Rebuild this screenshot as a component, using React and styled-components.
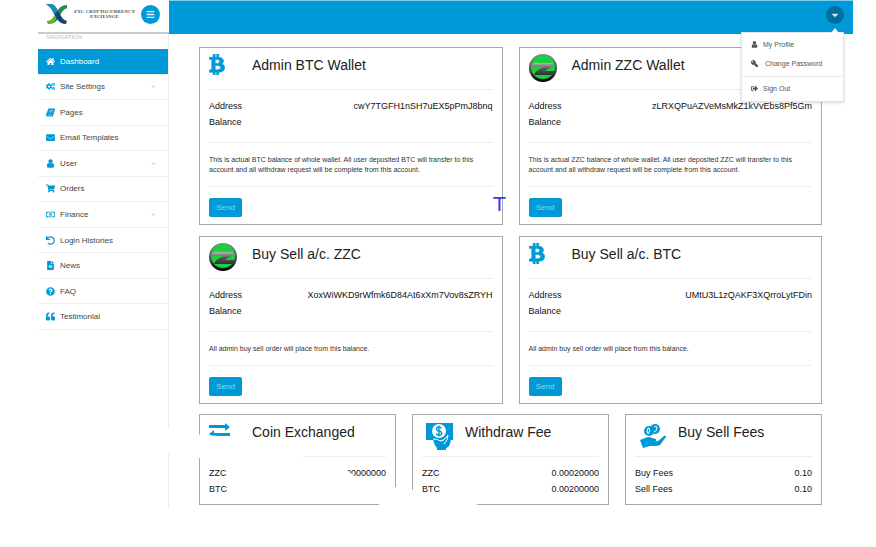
import React, { useState } from 'react'
import { styled, createGlobalStyle } from 'styled-components'
import {
  FaHome, FaCogs, FaEnvelope, FaShoppingCart, FaRegMoneyBillAlt, FaUndo, FaFileAlt,
  FaQuestionCircle, FaQuoteLeft, FaBtc, FaKey, FaSignOutAlt, FaBars, FaCaretDown, FaChevronDown
} from 'react-icons/fa'

const menus = [
  { name: 'Dashboard', icon: FaHome, active: true },
  { name: 'Site Settings', icon: FaCogs, sub: true },
  { name: 'Pages', icon: BookIcon },
  { name: 'Email Templates', icon: FaEnvelope },
  { name: 'User', icon: UserIcon, sub: true },
  { name: 'Orders', icon: FaShoppingCart },
  { name: 'Finance', icon: FaRegMoneyBillAlt, sub: true },
  { name: 'Login Histories', icon: FaUndo },
  { name: 'News', icon: FaFileAlt },
  { name: 'FAQ', icon: FaQuestionCircle },
  { name: 'Testimonial', icon: FaQuoteLeft },
]

const wallets = [
  {
    title: 'Admin BTC Wallet',
    icon: BtcIcon,
    address: 'cwY7TGFH1nSH7uEX5pPmJ8bnq',
    text: 'This is actual BTC balance of whole wallet. All user deposited BTC will transfer to this account and all withdraw request will be complete from this account.',
    mark: 'T',
  },
  {
    title: 'Admin ZZC Wallet',
    icon: CoinIcon,
    address: 'zLRXQPuAZVeMsMkZ1kVvEbs8Pf5Gm',
    text: 'This is actual ZZC balance of whole wallet. All user deposited ZZC will transfer to this account and all withdraw request will be complete from this account.',
  },
  {
    title: 'Buy Sell a/c. ZZC',
    icon: CoinIcon,
    address: 'XoxWiWKD9rWfmk6D84At6xXm7Vov8sZRYH',
    text: 'All admin buy sell order will place from this balance.',
  },
  {
    title: 'Buy Sell a/c. BTC',
    icon: BtcIcon,
    address: 'UMtU3L1zQAKF3XQrroLytFDin',
    text: 'All admin buy sell order will place from this balance.',
  },
]

const fees = [
  { title: 'Coin Exchanged', icon: ExchangeIcon, rows: [['ZZC', '0.00000000'], ['BTC', '']] },
  { title: 'Withdraw Fee', icon: WithdrawIcon, rows: [['ZZC', '0.00020000'], ['BTC', '0.00200000']] },
  { title: 'Buy Sell Fees', icon: FeesIcon, rows: [['Buy Fees', '0.10'], ['Sell Fees', '0.10']] },
]

export default function App() {
  const [open, setOpen] = useState(true)

  return (
    <Page>
      <GlobalStyle />
      <Header>
        <Brand>
          <LogoIcon />
          <BrandName>ZXC CRYPTOCURRENCY<br />EXCHANGE</BrandName>
          <MenuBtn aria-label='Toggle menu'><FaBars /></MenuBtn>
        </Brand>
        <Bar>
          <UserCon>
            <UserBtn aria-label='Account' onClick={() => setOpen(!open)}><FaCaretDown /></UserBtn>
            {
              open
              ?
              <Dropdown>
                <DropLink href='#profile'><UserIcon />My Profile</DropLink>
                <DropLink href='#password' $wide><FlipKey />Change Password</DropLink>
                <DropLine />
                <DropLink href='#signout'><FaSignOutAlt />Sign Out</DropLink>
              </Dropdown>
              :
              ''
            }
          </UserCon>
        </Bar>
      </Header>
      <Body>
        <Sidebar>
          <NavTitle>NAVIGATION</NavTitle>
          <NavList>
            {menus.map(({ name, icon: Icon, active, sub }) => (
              <NavItem key={name}>
                <NavLink href='#' $active={active}>
                  <Icon />
                  <span>{name}</span>
                  {sub && <Arrow />}
                </NavLink>
              </NavItem>
            ))}
          </NavList>
        </Sidebar>
        <Content>
          <Grid $cols={2}>
            {wallets.map(({ title, icon: Icon, address, text, mark }) => (
              <Card key={title}>
                <Head><IconCon><Icon /></IconCon><Title>{title}</Title></Head>
                <List>
                  <Row><dt>Address</dt><dd>{address}</dd></Row>
                  <Row><dt>Balance</dt><dd /></Row>
                </List>
                <Text>{text}</Text>
                <SendBtn>Send</SendBtn>
                {mark && <Mark>{mark}</Mark>}
              </Card>
            ))}
          </Grid>
          <Grid $cols={3}>
            {fees.map(({ title, icon: Icon, rows }) => (
              <Card key={title}>
                <Head><IconCon><Icon /></IconCon><Title>{title}</Title></Head>
                <List $last>
                  {rows.map(([label, value]) => (
                    <Row key={label}><dt>{label}</dt><dd>{value}</dd></Row>
                  ))}
                </List>
              </Card>
            ))}
            <Smear viewBox='0 0 330 100' aria-hidden='true'>
              <path d='M0 13 L30 20 L60 22 L105 41 L136 40 L180 54 L193 68 L206 68 L212 72 L236 73 L254 76 L275 80 L320 91 L318 96 L228 96 L218 89 L180 79 L110 62 L70 50 L40 44 L0 37 Z' fill='#fff' />
              <path d='M70 38 H135 V58 L186 54 L200 66 V82 L140 74 L75 50 Z' fill='#fff' />
            </Smear>
          </Grid>
        </Content>
      </Body>
    </Page>
  )
}

function LogoIcon() {
  return (
    <svg width='22' height='20' viewBox='0 0 22 20'>
      <path d='M21 1q-6 0-9 5l-5 8q-2 3-6 3l1 3q7 0 10-5l4-7q2-3 5-4z' fill='#2b8b4c' />
      <path d='M11 12q-2 8-8 8l-2-2q5-1 7-6z' fill='#68b82e' />
      <path d='M0 0h6q3 1 5 5l4 7q2 4 6 5l-1 3q-6 0-9-5l-4-7Q5 3 0 0z' fill='#15456f' />
      <path d='M0 0h6q3 1 5 5l1 2-4 3-1-2Q5 3 0 0z' fill='#1d8cc0' />
    </svg>
  )
}

function BookIcon() {
  return (
    <svg width='1em' height='1em' viewBox='0 0 18 18' fill='currentColor'>
      <path d='M6 1h11q1 0 1 2l-4 13q0 1-2 1H3q-3 0-3-3L4 3q0-2 2-2z' />
      <path d='M7 5h7M6 8h7M3 14h9' fill='none' stroke='#fff' />
    </svg>
  )
}

function UserIcon() {
  return (
    <svg width='1em' height='1em' viewBox='128 100 1536 1600' fill='currentColor'>
      <path d='M1536 1399q0 109-62.5 187t-150.5 78h-854q-88 0-150.5-78t-62.5-187q0-85 8.5-160.5t31.5-152 58.5-131 94-89 134.5-34.5q131 128 313 128t313-128q76 0 134.5 34.5t94 89 58.5 131 31.5 152 8.5 160.5zm-256-887q0 159-112.5 271.5t-271.5 112.5-271.5-112.5-112.5-271.5 112.5-271.5 271.5-112.5 271.5 112.5 112.5 271.5z' />
    </svg>
  )
}

function BtcIcon() {
  return <FaBtc size={21} viewBox='0 0 384 512' preserveAspectRatio='xMinYMid meet' stroke='currentColor' strokeWidth='16' />
}

function CoinIcon() {
  return (
    <svg width='28' height='28' viewBox='0 0 28 28'>
      <defs>
        <linearGradient id='rim' x1='0' y1='0' x2='0' y2='1'>
          <stop offset='0' stopColor='#888' />
          <stop offset='0.5' stopColor='#555' />
          <stop offset='1' stopColor='#000' />
        </linearGradient>
        <linearGradient id='zed' x1='0' y1='0' x2='0' y2='1'>
          <stop offset='0' stopColor='#bdbdbd' />
          <stop offset='0.5' stopColor='#555' />
          <stop offset='1' stopColor='#333' />
        </linearGradient>
      </defs>
      <circle cx='14' cy='14' r='14' fill='url(#rim)' />
      <circle cx='14' cy='13' r='12' fill='#17d23c' />
      <path d='M1 13q4-6 9-4h14q1 3-5 6l-3 2h10l-2 4H5q1-4 8-7l2-1q-6-1-14 0z' fill='url(#zed)' />
    </svg>
  )
}

function ExchangeIcon() {
  return (
    <svg width='21' height='19' viewBox='0 0 21 19' fill='#0099d8'>
      <path d='M0 4h16V2l5 4-5 4V7H0z' />
      <path d='M21 15H5v2l-5-4 5-4v3h16z' />
    </svg>
  )
}

function WithdrawIcon() {
  return (
    <svg width='32' height='30' viewBox='0 0 32 30'>
      <path d='M4 2h27v17H4z' fill='#0099d8' />
      <circle cx='17' cy='10' r='7' fill='#fff' />
      <path d='M19.500 7.300q-1-1.300-2.700-1.300-2.300 0-2.300 1.900 0 1.600 2.500 2.100 2.700.600 2.700 2.200 0 2-2.700 2-2 0-2.900-1.500M17 4.500v11' fill='none' stroke='#0099d8' strokeWidth='1.400' />
      <path d='M11 18l5 1 5 1 5-5 4-1-2 9q-1 3-4 4v2h-9v-2q-3-3-4-9z' fill='#0099d8' />
      <path d='M11 18q4 0 8 2 4-1 7-6l-1 5-3 4' fill='none' stroke='#fff' />
    </svg>
  )
}

function FeesIcon() {
  return (
    <svg width='32' height='30' viewBox='0 0 32 30' fill='#0099d8'>
      <ellipse cx='14' cy='10' rx='5' ry='5' />
      <ellipse cx='20' cy='8' rx='5' ry='5' />
      <path d='M13 7q-2 3 0 6 3-3 1-6zM19 6q3-2 3 1t-3 4' fill='none' stroke='#fff' />
      <path d='M5 19l5-2q4-2 7 0l4 1q1 2-1 3h-3l6-1 6-5q3-1 2 1l-6 8q-2 1-5 1h-5l-7 2z' />
    </svg>
  )
}

const GlobalStyle = createGlobalStyle`
  * {
    box-sizing: border-box;
  }
  body {
    margin: 0;
    background-color: #fff;
    color: #333;
    font-family: "Liberation Sans", Arial, sans-serif;
  }
  button {
    font-family: inherit;
    cursor: pointer;
  }
`
const Page = styled.div`
  padding: 0 23px 0 38px;
`
const Header = styled.header`
  height: 34px;
  display: flex;
`
const Brand = styled.div`
  flex: 0 0 131px;
  padding: 0 9px 4px 8px;
  border-bottom: 2px solid #c3cbd3;

  display: flex;
  align-items: center;
`
const BrandName = styled.div`
  flex: 1;
  font-family: "Liberation Serif", serif;
  font-size: 5px;
  line-height: 5px;
  font-weight: bold;
  text-align: center;
  white-space: nowrap;
  color: #555;
`
const MenuBtn = styled.button`
  width: 19px;
  height: 19px;
  padding: 0;
  border: 0;
  border-radius: 50%;
  background-color: #0099d8;
  color: #d5f0fb;
  font-size: 9px;

  display: grid;
  place-items: center;
`
const Bar = styled.div`
  flex: 1;
  padding: 5px 9px 0;
  background-color: #0099d8;
  border-top: 1px solid #7fcbea;

  display: flex;
  justify-content: flex-end;
`
const UserCon = styled.div`
  position: relative;
`
const UserBtn = styled.button`
  width: 18px;
  height: 18px;
  padding: 0;
  border: 0;
  border-radius: 50%;
  background-color: #006f9d;
  color: #cfe9f4;
  font-size: 10px;

  display: grid;
  place-items: center;
`
const Dropdown = styled.div`
  position: absolute;
  top: 26px;
  right: 0;
  z-index: 2;
  width: 103px;
  padding: 2px 0 3px;
  background-color: #fff;
  border: 1px solid #e4e4e4;
  box-shadow: 0 1px 3px rgba(0, 0, 0, 0.15);

  &::before {
    content: '';
    position: absolute;
    top: -5px;
    right: 4px;
    border: 4px solid transparent;
    border-top: 0;
    border-bottom: 5px solid #fff;
  }
`
const DropLink = styled.a`
  height: 19px;
  padding-left: 9px;
  font-size: 7px;
  white-space: nowrap;
  text-decoration: none;
  color: #555;

  display: flex;
  align-items: center;
  gap: ${(props) => props.$wide ? 7 : 5}px;
`
const DropLine = styled.hr`
  margin: 3px 0 2px;
  border: 0;
  border-top: 1px solid #e8e8e8;
`
const FlipKey = styled(FaKey)`
  transform: scaleX(-1);
`
const Body = styled.div`
  display: flex;
`
const Sidebar = styled.nav`
  flex: 0 0 131px;
  border-right: 1px solid #ececec;
`
const NavTitle = styled.div`
  height: 15px;
  padding-left: 8px;
  font-size: 6px;
  line-height: 6px;
  color: #bbb;
`
const NavList = styled.ul`
  min-height: 281px;
  margin: 0;
  padding: 0;
  list-style: none;

  display: grid;
  grid-auto-rows: 1fr;
`
const NavItem = styled.li`
  border-bottom: 1px solid #eee;
`
const NavLink = styled.a`
  height: 100%;
  padding: 0 12px 0 8px;
  background-color: ${(props) => props.$active ? '#0099d8' : 'transparent'};
  color: ${(props) => props.$active ? '#fff' : '#444'};
  font-size: 8px;
  text-decoration: none;

  display: flex;
  align-items: center;
  gap: 5px;

  & > svg:first-child {
    width: 9px;
    height: 9px;
    color: ${(props) => props.$active ? '#fff' : '#0099d8'};
  }
  & > span {
    flex: 1;
  }
`
const Arrow = styled(FaChevronDown)`
  width: 5px;
  height: 5px;
  color: #ccc;
`
const Content = styled.main`
  flex: 1;
  min-width: 0;
  padding: 13px 31px 3px 30px;

  display: grid;
  gap: 10px;
`
const Grid = styled.div`
  position: relative;

  display: grid;
  grid-template-columns: repeat(${(props) => props.$cols}, 1fr);
  gap: 11px 16px;
`
const Card = styled.section`
  position: relative;
  padding: 0 9px;
  border: 1px solid #aaa4ae;
`
const Head = styled.div`
  height: 42px;
  padding-top: 6px;
  border-bottom: 1px solid #eee;

  display: flex;
  align-items: flex-start;
`
const IconCon = styled.span`
  flex: 0 0 43px;
  color: #0099d8;

  display: flex;
`
const Title = styled.h2`
  margin: 0;
  font-size: 14px;
  line-height: 22px;
  font-weight: 500;
  color: #222;
`
const List = styled.dl`
  margin: 0;
  padding: 8px 0 ${(props) => props.$last ? 7 : 12}px;
`
const Row = styled.div`
  font-size: 9px;
  line-height: 16px;
  color: #111;

  display: flex;
  justify-content: space-between;

  & > dd {
    margin: 0;
  }
`
const Text = styled.p`
  margin: 0;
  padding: 12px 16px 11px 0;
  border-top: 1px solid #eee;
  border-bottom: 1px solid #eee;
  font-size: 7px;
  line-height: 10px;
  color: #333;
`
const SendBtn = styled.button`
  display: block;
  width: 33px;
  height: 19px;
  margin: 11px 0 7px;
  padding: 0;
  border: 0;
  border-radius: 2px;
  background-color: #0099d8;
  color: #7fdcf5;
  font-size: 8px;
`
const Mark = styled.span`
  position: absolute;
  right: -4px;
  bottom: 8px;
  z-index: 1;
  font-family: "DejaVu Sans", sans-serif;
  font-size: 20px;
  line-height: 24px;
  color: #3a3aff;
`
const Smear = styled.svg`
  position: absolute;
  top: 0;
  left: -40px;
  width: 330px;
  height: 100px;
  pointer-events: none;
`
